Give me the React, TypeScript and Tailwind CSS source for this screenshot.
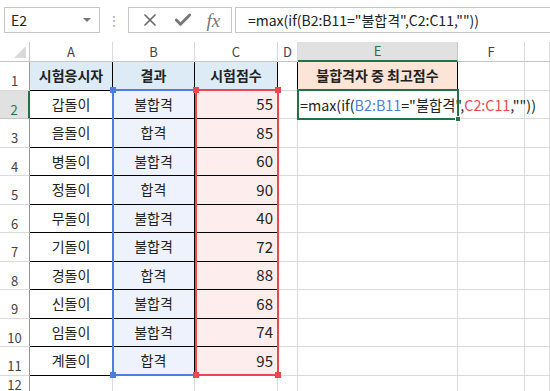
import { X, Check } from 'lucide-react'

const FONT = "font-['Noto_Sans_CJK_KR','Noto_Sans',sans-serif]"

const rows: [string, string, number][] = [
  ['갑돌이', '불합격', 55],
  ['을돌이', '합격', 85],
  ['병돌이', '불합격', 60],
  ['정돌이', '합격', 90],
  ['무돌이', '불합격', 40],
  ['기돌이', '불합격', 72],
  ['경돌이', '합격', 88],
  ['신돌이', '불합격', 68],
  ['임돌이', '불합격', 74],
  ['계돌이', '합격', 95],
]

function ColHead({ label, active }: { label: string; active?: boolean }) {
  return (
    <div
      className={
        active
          ? 'flex items-center justify-center border-r border-r-[#c6c6c6] border-b-2 border-b-[#217346] bg-[#e1e1e1] text-[13px] text-[#217346]'
          : 'flex items-center justify-center border-r border-r-[#dadada] border-b border-b-[#c6c6c6] text-[13px] text-[#444]'
      }
    >
      {label}
    </div>
  )
}

function RowHead({ n, active }: { n: number; active?: boolean }) {
  return (
    <div
      className={
        active
          ? 'flex items-center justify-center pt-[10px] border-r-2 border-r-[#217346] border-b border-b-[#c6c6c6] bg-[#e1e1e1] text-[13px] text-[#217346]'
          : 'flex items-center justify-center pt-[10px] border-r border-r-[#9a9a9a] border-b border-b-[#dadada] text-[13px] text-[#444]'
      }
    >
      {n}
    </div>
  )
}

function Blank() {
  return <div className="border-r border-b border-[#dadada]" />
}

export default function App() {
  return (
    <div className={`w-[550px] h-[391px] overflow-hidden bg-white ${FONT}`}>
      {/* formula bar */}
      <div className="h-[42px] flex items-start pt-[7px] pl-[4px]">
        <div className="w-[96px] h-[26px] border border-[#c6c6c6] flex items-center justify-between pl-[6px] pr-[8px]">
          <span className="text-[14px] text-[#222]">E2</span>
          <span className="w-0 h-0 border-l-[4px] border-r-[4px] border-t-[4px] border-l-transparent border-r-transparent border-t-[#777]" />
        </div>
        <div className="w-[28px] h-[26px] flex items-center justify-center text-[#aaa] text-[14px]">⋮</div>
        <div className="w-[104px] h-[26px] border border-[#c6c6c6] flex items-center justify-around px-[4px] text-[#6a6a6a]">
          <X size={20} strokeWidth={2} />
          <Check size={20} strokeWidth={3.5} className="text-[#777]" />
          <span className="font-['Liberation_Serif',serif] italic text-[19px] text-[#777] leading-none">fx</span>
        </div>
        <div className="ml-[3px] flex-1 h-[26px] border border-[#c6c6c6] border-r-0 flex items-center pl-[12px] text-[14px] text-[#222] whitespace-nowrap">
          =max(if(B2:B11="불합격",C2:C11,""))
        </div>
      </div>

      {/* sheet */}
      <div className="relative">
        <div className="grid grid-cols-[30px_83px_82px_83px_20px_160px_67px_1fr] grid-rows-[20px_repeat(12,28.5px)] text-[14px] text-[#222]">
          {/* column headers */}
          <div className="relative border-r border-b border-[#c6c6c6]">
            <svg className="absolute right-[3px] bottom-[3px]" width="12" height="12" viewBox="0 0 12 12">
              <path d="M12 0 L12 12 L0 12 Z" fill="#dadada" />
            </svg>
          </div>
          <ColHead label="A" />
          <ColHead label="B" />
          <ColHead label="C" />
          <ColHead label="D" />
          <ColHead label="E" active />
          <ColHead label="F" />
          <ColHead label="" />

          {/* row 1 */}
          <RowHead n={1} />
          <div className="flex items-center justify-center border-r border-b border-black bg-[#ddebf7] font-bold">시험응시자</div>
          <div className="flex items-center justify-center border-r border-b border-black bg-[#ddebf7] font-bold">결과</div>
          <div className="flex items-center justify-center border-r border-b border-black bg-[#ddebf7] font-bold">시험점수</div>
          <div className="border-r border-r-black border-b border-b-[#dadada]" />
          <div className="flex items-center justify-center border-r border-r-black border-b border-b-[#1d5a36] bg-[#fce4d6] font-bold">불합격자 중 최고점수</div>
          <Blank />
          <Blank />

          {rows.map(([name, result, score], i) => (
            <div key={name} className="contents">
              <RowHead n={i + 2} active={i === 0} />
              <div className="flex items-center justify-center border-r border-b border-black">{name}</div>
              <div className="flex items-center justify-center border-r border-b border-black bg-[#eef2fc]">{result}</div>
              <div className="flex items-center justify-end pr-[4px] border-r border-b border-black bg-[#fdeded] text-[15px]">{score}</div>
              <div className="border-r border-b border-[#dadada]" />
              {i === 0 ? (
                <div className="relative flex items-center border-r border-b border-[#dadada] overflow-visible whitespace-nowrap pl-[2px] text-[14.3px] z-10">
                  <span>=max(if(</span>
                  <span className="text-[#4a7fe0]">B2:B11</span>
                  <span>="불합격",</span>
                  <span className="text-[#e9494e]">C2:C11</span>
                  <span>,""))</span>
                  <span className="ml-[2px] w-px h-[18px] bg-black" />
                </div>
              ) : (
                <Blank />
              )}
              <Blank />
              <Blank />
            </div>
          ))}

          {/* row 12 */}
          <div className="flex items-start justify-center pt-[2px] border-r border-r-[#9a9a9a] text-[13px] leading-[13px] text-[#444]">12</div>
          <Blank />
          <Blank />
          <Blank />
          <Blank />
          <Blank />
          <Blank />
          <Blank />
        </div>

        {/* range highlight B2:B11 */}
        <div className="absolute left-[112px] top-[47px] w-[85px] h-[287px] border-2 border-[#4a7fe0] pointer-events-none">
          <span className="absolute -left-[4px] -top-[4px] w-[6px] h-[6px] bg-[#4a7fe0]" />
          <span className="absolute -right-[4px] -top-[4px] w-[6px] h-[6px] bg-[#4a7fe0]" />
          <span className="absolute -left-[4px] -bottom-[4px] w-[6px] h-[6px] bg-[#4a7fe0]" />
          <span className="absolute -right-[4px] -bottom-[4px] w-[6px] h-[6px] bg-[#4a7fe0]" />
        </div>
        {/* range highlight C2:C11 */}
        <div className="absolute left-[195px] top-[47px] w-[84px] h-[287px] border-2 border-[#e9494e] pointer-events-none">
          <span className="absolute -left-[4px] -top-[4px] w-[6px] h-[6px] bg-[#e9494e]" />
          <span className="absolute -right-[4px] -top-[4px] w-[6px] h-[6px] bg-[#e9494e]" />
          <span className="absolute -left-[4px] -bottom-[4px] w-[6px] h-[6px] bg-[#e9494e]" />
          <span className="absolute -right-[4px] -bottom-[4px] w-[6px] h-[6px] bg-[#e9494e]" />
        </div>
        {/* active cell E2 */}
        <div className="absolute left-[297px] top-[47px] w-[162px] h-[31px] border-2 border-[#217346] pointer-events-none z-20">
          <span className="absolute -right-[4px] -bottom-[4px] w-[6px] h-[6px] bg-[#217346] border border-white" />
        </div>
      </div>
    </div>
  )
}
